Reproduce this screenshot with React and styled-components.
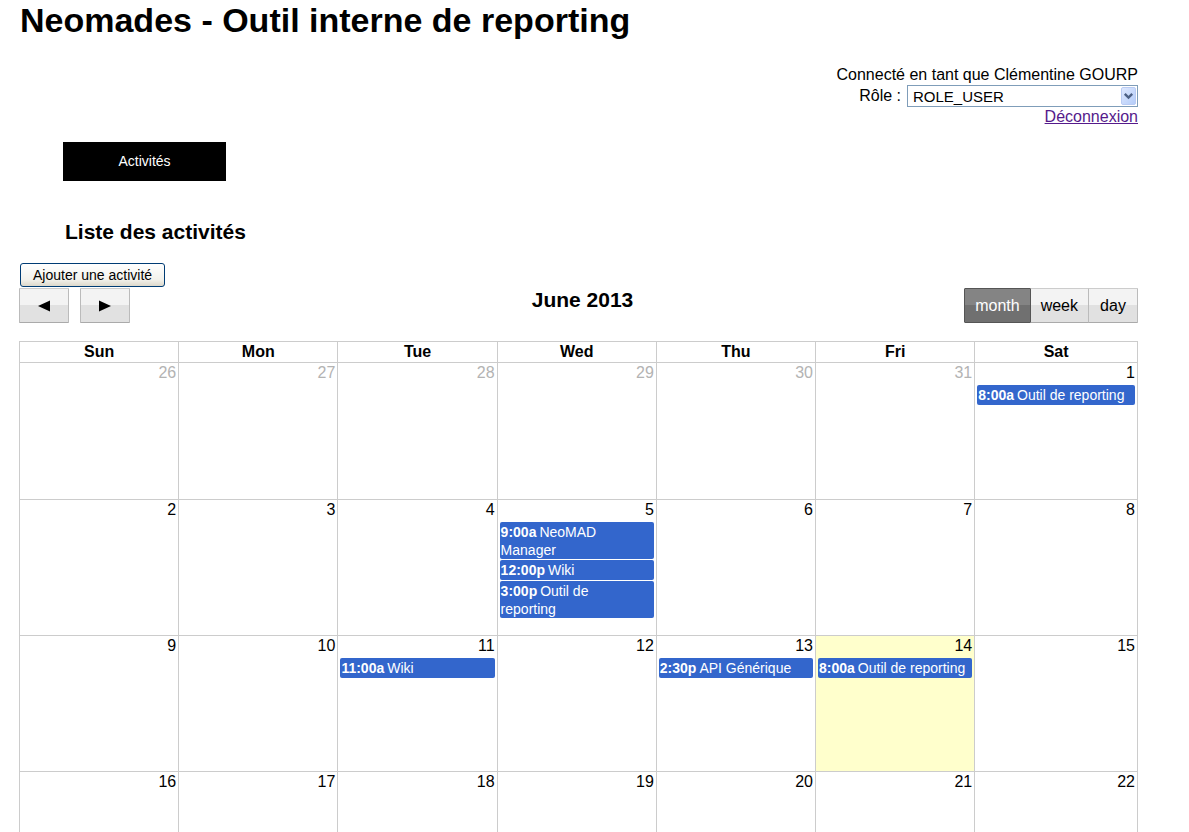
import React, { useState } from "react";
import styled, { createGlobalStyle, css } from "styled-components";

const GlobalStyle = createGlobalStyle`
  body {
    margin: 0;
    background: #fff;
    color: #000;
    font-family: "Liberation Sans", Arial, Helvetica, sans-serif;
    font-size: 16px;
    line-height: 20px;
  }
  button, select {
    font-family: inherit;
    color: inherit;
  }
`;

const Page = styled.div`
  padding: 0 51px 0 19px;
`;

const Title = styled.h1`
  margin: 0;
  padding-left: 1px;
  font-size: 34px;
  line-height: 40px;
`;

const UserPanel = styled.div`
  display: flex;
  flex-direction: column;
  align-items: flex-end;
  padding-top: 25px;
`;

const RoleRow = styled.div`
  display: flex;
  align-items: center;
  gap: 6px;
`;

const SelectBox = styled.div`
  position: relative;
  width: 231px;
  height: 22px;
`;

const RoleSelect = styled.select`
  appearance: none;
  display: block;
  width: 100%;
  height: 100%;
  margin: 0;
  padding: 0 20px 0 5px;
  border: 1px solid #7f9db9;
  border-radius: 0;
  background: #fff;
  font-size: 15px;
`;

const SelectArrow = styled.svg`
  position: absolute;
  top: 2px;
  right: 2px;
  pointer-events: none;
`;

const LogoutLink = styled.a`
  color: #551a8b;
`;

const Nav = styled.nav`
  display: flex;
  padding: 15px 0 0 44px;
`;

const NavLink = styled.a`
  width: 163px;
  background: #000;
  color: #fff;
  font-size: 14px;
  line-height: 39px;
  text-align: center;
  text-decoration: none;
`;

const SectionTitle = styled.h2`
  margin: 0;
  padding: 39px 0 19px 46px;
  font-size: 21px;
  line-height: 24px;
`;

const AddButton = styled.button`
  display: block;
  height: 24px;
  margin: 0 0 1px 1px;
  padding: 0 12px;
  border: 1px solid #003c74;
  border-radius: 3px;
  background: linear-gradient(#fff, #f3f2ec 70%, #dcd8cb);
  font-size: 14px;
`;

const Toolbar = styled.div`
  display: grid;
  grid-template-columns: 1fr auto 1fr;
  padding-bottom: 18px;
`;

const ButtonGroup = styled.div`
  display: flex;
  gap: ${(p) => p.$gap || 0}px;
  justify-content: ${(p) => (p.$end ? "flex-end" : "flex-start")};
`;

const CalendarTitle = styled.h3`
  margin: 0;
  padding-left: 8px;
  font-size: 21px;
  line-height: 24px;
`;

const ToolButton = styled.button`
  display: flex;
  align-items: center;
  justify-content: center;
  min-width: 50px;
  height: 35px;
  padding: 0 10px;
  border: 1px solid #bbb;
  border-top-color: #ccc;
  border-bottom-color: #aaa;
  border-radius: 1px;
  background: linear-gradient(#f3f3f3 50%, #e1e1e1 50%);
  font-size: 16px;

  ${(p) => p.$joined && css`
    margin-left: -1px;
  `}
  ${(p) => p.$active && css`
    z-index: 1;
    border-color: #555;
    background: linear-gradient(#848484 50%, #707070 50%);
    color: #fff;
  `}
`;

const Calendar = styled.table`
  width: 100%;
  table-layout: fixed;
  border-collapse: separate;
  border-spacing: 0;
  border-right: 1px solid #ccc;
`;

const DayHeading = styled.th`
  width: ${(p) => (p.$last ? "auto" : "14.24%")};
  box-sizing: border-box;
  padding: 0;
  border: solid #ccc;
  border-width: 1px 0 0 1px;
  line-height: 20px;
`;

const DayCell = styled.td`
  box-sizing: border-box;
  height: 136px;
  padding: 0 2px;
  border: solid #ccc;
  border-width: 1px 0 0 1px;
  background: ${(p) => (p.$today ? "#ffffcc" : "transparent")};
  vertical-align: top;

  tr:first-child > & {
    height: 137px;
  }
`;

const DayNumber = styled.div`
  padding-bottom: 2px;
  color: ${(p) => (p.$other ? "#b3b3b3" : "#000")};
  text-align: right;
`;

const EventList = styled.div`
  display: flex;
  flex-direction: column;
  gap: 1px;
`;

const Event = styled.a`
  box-sizing: border-box;
  min-height: 20px;
  padding: 1px 1px 0;
  border-radius: 2px;
  background: #3366cc;
  color: #fff;
  font-size: 14px;
  line-height: 18px;
  text-decoration: none;
  white-space: pre-line;
`;

const EventTime = styled.strong`
  padding-right: 3px;
`;

const DAYS = ["Sun", "Mon", "Tue", "Wed", "Thu", "Fri", "Sat"];

const WEEKS = [
  [26, 27, 28, 29, 30, 31, 1],
  [2, 3, 4, 5, 6, 7, 8],
  [9, 10, 11, 12, 13, 14, 15],
  [16, 17, 18, 19, 20, 21, 22],
];

const EVENTS = {
  1: [["8:00a", "Outil de reporting"]],
  5: [["9:00a", "NeoMAD\nManager"], ["12:00p", "Wiki"], ["3:00p", "Outil de\nreporting"]],
  11: [["11:00a", "Wiki"]],
  13: [["2:30p", "API Générique"]],
  14: [["8:00a", "Outil de reporting"]],
};

const TODAY = 14;

export default function App() {
  const [view, setView] = useState("month");

  return (
    <>
      <GlobalStyle />
      <Page>
        <header>
          <Title>Neomades - Outil interne de reporting</Title>
          <UserPanel>
            <div>Connecté en tant que Clémentine GOURP</div>
            <RoleRow>
              <label htmlFor="role">Rôle :</label>
              <SelectBox>
                <RoleSelect id="role" defaultValue="ROLE_USER">
                  <option>ROLE_USER</option>
                </RoleSelect>
                <SelectArrow width="15" height="18" viewBox="0 0 15 18" aria-hidden="true">
                  <defs>
                    <linearGradient id="arrowFill" x1="0" y1="0" x2="1" y2="1">
                      <stop offset="0" stopColor="#dfe9ff" />
                      <stop offset="1" stopColor="#b3cbf8" />
                    </linearGradient>
                  </defs>
                  <rect x="0.5" y="0.5" width="14" height="17" rx="1.5" fill="url(#arrowFill)" stroke="#b9cbf3" />
                  <path d="M3.8 6.8 L7.5 10.5 L11.2 6.8" fill="none" stroke="#4d6185" strokeWidth="2.4" />
                </SelectArrow>
              </SelectBox>
            </RoleRow>
            <LogoutLink href="#logout">Déconnexion</LogoutLink>
          </UserPanel>
        </header>
        <Nav>
          <NavLink href="#activites">Activités</NavLink>
        </Nav>
        <main>
          <SectionTitle>Liste des activités</SectionTitle>
          <AddButton type="button">Ajouter une activité</AddButton>
          <Toolbar>
            <ButtonGroup $gap={11}>
              <ToolButton type="button" aria-label="Previous month">
                <svg width="12" height="12" viewBox="0 0 12 12"><path d="M0 6 L12 0.5 V11.5 Z" /></svg>
              </ToolButton>
              <ToolButton type="button" aria-label="Next month">
                <svg width="12" height="12" viewBox="0 0 12 12"><path d="M12 6 L0 0.5 V11.5 Z" /></svg>
              </ToolButton>
            </ButtonGroup>
            <CalendarTitle>June 2013</CalendarTitle>
            <ButtonGroup $end>
              {["month", "week", "day"].map((name, i) => (
                <ToolButton
                  key={name}
                  type="button"
                  $joined={i > 0}
                  $active={view === name}
                  aria-pressed={view === name}
                  onClick={() => setView(name)}
                >
                  {name}
                </ToolButton>
              ))}
            </ButtonGroup>
          </Toolbar>
          <Calendar>
            <thead>
              <tr>
                {DAYS.map((day) => (
                  <DayHeading key={day} scope="col" $last={day === "Sat"}>{day}</DayHeading>
                ))}
              </tr>
            </thead>
            <tbody>
              {WEEKS.map((week, row) => (
                <tr key={week[0]}>
                  {week.map((day) => (
                    <DayCell key={day} $today={day === TODAY}>
                      <DayNumber $other={row === 0 && day > 7}>{day}</DayNumber>
                      {EVENTS[day] && (
                        <EventList>
                          {EVENTS[day].map(([time, name]) => (
                            <Event key={time} href="#activite">
                              <EventTime>{time}</EventTime>
                              {name}
                            </Event>
                          ))}
                        </EventList>
                      )}
                    </DayCell>
                  ))}
                </tr>
              ))}
            </tbody>
          </Calendar>
        </main>
      </Page>
    </>
  );
}
